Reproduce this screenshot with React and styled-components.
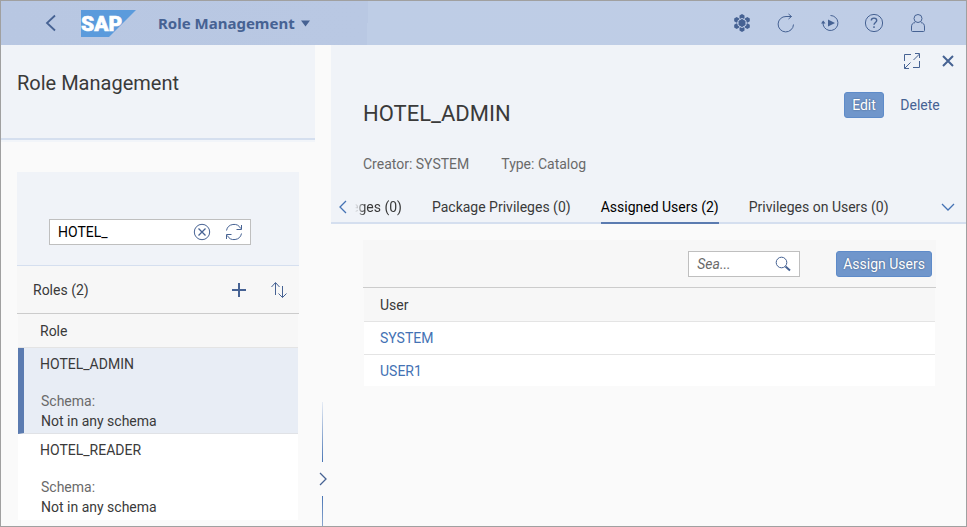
import React from "react";
import styled, { createGlobalStyle } from "styled-components";

const GlobalStyle = createGlobalStyle`
  *, *::before, *::after { box-sizing: border-box; }
  body {
    margin: 0;
    background: #fafafa;
    color: #3a3a3a;
    font: 14px/20px Roboto, "Liberation Sans", sans-serif;
  }
  h1, h2, p { margin: 0; font-weight: 400; }
`;

const Page = styled.div`
  display: flex;
  flex-direction: column;
  min-height: 100vh;
  border: 1px solid #a0a0a0;
  background: #fafafa;
`;

const ShellBar = styled.header`
  display: flex;
  align-items: center;
  justify-content: space-between;
  height: 44px;
  padding: 0 26px 0 34px;
  background: linear-gradient(92deg, #b8c7e2 0, #b9c8e3 38%, #becde6 38%, #bfcde6 100%);
`;

const ShellGroup = styled.div`
  display: flex;
  align-items: center;
`;

const IconButton = styled.button`
  display: inline-flex;
  align-items: center;
  justify-content: center;
  flex: none;
  width: ${(p) => p.$width || 32}px;
  height: ${(p) => p.$height || 24}px;
  padding: 0;
  border: 0;
  background: transparent;
  color: ${(p) => p.$color || "#466293"};
  cursor: pointer;
`;

const LogoLink = styled.a`
  display: flex;
  margin-left: 14px;
`;

const AppTitle = styled.button`
  display: flex;
  align-items: center;
  gap: 6px;
  margin-left: 22px;
  padding: 0;
  border: 0;
  background: transparent;
  color: #466293;
  font: 700 15px/24px "Noto Sans", sans-serif;
  cursor: pointer;
`;

const Columns = styled.main`
  flex: 1;
  display: grid;
  grid-template-columns: 314px 16px minmax(0, 1fr);
`;

const MasterHeader = styled.div`
  height: 95px;
  padding: 25px 16px 0;
  background: #f0f3f8;
  border-bottom: 2px solid #d5dfef;
  box-shadow: 0 2px 0 #f2f5f9;
`;

const PageTitle = styled.h1`
  font-size: 20px;
  line-height: 26px;
`;

const ListCard = styled.div`
  margin: 32px 16px 6px;
`;

const FilterArea = styled.div`
  padding: 47px 48px 20px 32px;
  background: #f0f3f8;
  border-bottom: 1px solid #d5dfef;
`;

const Field = styled.form`
  display: flex;
  align-items: center;
  width: ${(p) => p.$width || "100%"};
  height: 26px;
  padding-left: 8px;
  background: #fff;
  border: 1px solid #bfbfbf;
`;

const FieldInput = styled.input`
  flex: 1;
  min-width: 0;
  height: 24px;
  padding: 0;
  border: 0;
  outline: 0;
  background: transparent;
  color: #000;
  font: inherit;
  &::placeholder {
    color: #6a6a6a;
    font-style: italic;
    opacity: 1;
  }
`;

const Toolbar = styled.div`
  display: flex;
  align-items: center;
  justify-content: ${(p) => (p.$end ? "flex-end" : "space-between")};
  gap: ${(p) => (p.$end ? 36 : 8)}px;
  height: 48px;
  padding: ${(p) => (p.$end ? "0 4px" : "0 4px 0 16px")};
  background: #f7f7f7;
  border-bottom: 1px solid #ccc;
`;

const ToolbarActions = styled.div`
  display: flex;
  gap: 8px;
`;

const TableWrap = styled.div`
  padding: 0 1px;
`;

const Table = styled.table`
  width: 100%;
  border-collapse: separate;
  border-spacing: 0;
`;

const HeadCell = styled.th`
  height: 34px;
  padding: 0 ${(p) => p.$pad}px;
  background: #f7f7f7;
  border-bottom: 1px solid #e4e4e4;
  font-weight: 400;
  text-align: left;
`;

const RoleCell = styled.td`
  height: 86px;
  padding: 6px 16px 2px;
  vertical-align: top;
  border-left: 6px solid ${(p) => (p.$selected ? "#5b7bb0" : "#fff")};
  border-bottom: ${(p) => (p.$selected ? "1px solid #e0e2e6" : "0")};
  background: ${(p) => (p.$selected ? "#e8edf5" : "#fff")};
`;

const RoleDetail = styled.dl`
  margin: 17px 0 0 1px;
`;

const DetailLabel = styled.dt`
  color: #6a6a6a;
`;

const DetailValue = styled.dd`
  margin: 0;
`;

const Splitter = styled.div`
  display: flex;
  flex-direction: column;
  align-items: center;
  justify-content: flex-end;
  gap: 4px;
  padding-right: 1px;
`;

const SplitLine = styled.div`
  width: 1px;
  height: ${(p) => (p.$fade ? 60 : 30)}px;
  background: ${(p) => (p.$fade ? "linear-gradient(#e6ecf5, #4a76b5)" : "linear-gradient(#4a76b5, #8aa6cf)")};
`;

const ObjectHeader = styled.div`
  background: #f0f3f8;
`;

const WindowActions = styled.div`
  display: flex;
  justify-content: flex-end;
  padding-top: 4px;
`;

const TitleRow = styled.div`
  display: flex;
  justify-content: space-between;
  align-items: flex-start;
  padding: 19px 26px 0 32px;
`;

const ObjectTitle = styled.h2`
  margin-top: 9px;
  font-size: 22px;
  line-height: 26px;
`;

const Actions = styled.div`
  display: flex;
  gap: 16px;
`;

const Button = styled.button`
  min-width: 40px;
  height: 26px;
  padding: 0 ${(p) => (p.$primary ? 6 : 0)}px;
  border: ${(p) => (p.$primary ? "1px solid #5e8bc9" : "0")};
  border-radius: 3px;
  background: ${(p) => (p.$primary ? "#7096cb" : "transparent")};
  color: ${(p) => (p.$primary ? "#fff" : "#466293")};
  font: inherit;
  text-shadow: ${(p) => (p.$primary ? "0 0 2px rgba(0, 0, 0, 0.4)" : "none")};
  cursor: pointer;
`;

const Meta = styled.div`
  display: flex;
  gap: 32px;
  padding: 27px 32px 23px;
  color: #6a6a6a;
`;

const TabBar = styled.div`
  display: flex;
  align-items: flex-start;
  height: 27px;
  border-bottom: 2px solid #d5dfef;
`;

const TabList = styled.nav`
  flex: 1;
  min-width: 0;
  display: flex;
  gap: 30px;
  height: 27px;
  margin-left: -4px;
`;

const Tab = styled.button`
  flex: none;
  padding: 0 0 5px;
  border: 0;
  border-bottom: 2px solid ${(p) => (p.$active ? "#5b7bb0" : "transparent")};
  background: transparent;
  color: ${(p) => (p.$active ? "#000" : "#3a3a3a")};
  font: inherit;
  white-space: nowrap;
  cursor: pointer;
  ${(p) => p.$faded && "mask-image: linear-gradient(90deg, transparent 4px, #000 14px);"}
`;

const Content = styled.div`
  padding: 16px 30px 16px 32px;
`;

const UserCell = styled.td`
  height: ${(p) => (p.$last ? 31 : 33)}px;
  padding: 0 16px;
  background: #fff;
  border-bottom: ${(p) => (p.$last ? "0" : "1px solid #e4e4e4")};
`;

const UserLink = styled.a`
  color: #4472b4;
  text-decoration: none;
`;

const Svg = ({ w, h, sw = 1, children }) => (
  <svg width={w} height={h} viewBox={`0 0 ${w} ${h}`} fill="none" stroke="currentColor" strokeWidth={sw} aria-hidden="true">
    {children}
  </svg>
);

const hex = (cx, cy, r) =>
  [0, 1, 2, 3, 4, 5]
    .map((i) => {
      const a = (Math.PI / 3) * i + Math.PI / 6;
      return `${(cx + r * Math.cos(a)).toFixed(2)},${(cy + r * Math.sin(a)).toFixed(2)}`;
    })
    .join(" ");

const HexIcon = () => (
  <Svg w={18} h={18}>
    <g fill="currentColor" stroke="none">
      {[[9, 2.9], [14.3, 5.9], [14.3, 12.1], [9, 15.1], [3.7, 12.1], [3.7, 5.9]].map(([x, y]) => (
        <polygon key={`${x}-${y}`} points={hex(x, y, 2.9)} />
      ))}
    </g>
    <polygon points={hex(9, 9, 4.6)} fill="currentColor" stroke="#bfcde6" strokeWidth="1" />
  </Svg>
);

const RefreshIcon = () => (
  <Svg w={18} h={20}>
    <path d="M16.5 11.5A7.7 7.7 0 1 1 9 3.5h5.5M11.5 1l3 2.5-3 2.5" />
  </Svg>
);

const ReplayIcon = () => (
  <Svg w={18} h={18}>
    <path d="M9.5 1.5A7.5 7.5 0 1 1 2.200 11V7.500" />
    <path d="M0 9.500l2.200-3 2.300 3zM7 5.500v7l7-3.500z" fill="currentColor" stroke="none" />
  </Svg>
);

const HelpIcon = () => (
  <Svg w={20} h={20}>
    <circle cx="10" cy="10" r="8.6" />
    <path d="M7.3 7.6c0-1.6 1.1-2.5 2.7-2.5s2.7.9 2.7 2.3c0 2-2.7 2.1-2.7 4.4M10 13.3v1.6" strokeWidth="1.4" />
  </Svg>
);

const PersonIcon = () => (
  <Svg w={16} h={20}>
    <circle cx="8" cy="5.5" r="4" />
    <path d="M5 9.7c-2.500 0-3.500 1.800-3.500 4.300v3.500q0 1 1 1h11q1 0 1-1V14c0-2.500-1-4.300-3.500-4.300" />
  </Svg>
);

const ExpandIcon = () => (
  <Svg w={18} h={18}>
    <path d="M1.500 9V2.500H8M16.500 9v6.500H10M10.500 8l6-6M12 1.500h4.500V6M7.500 10.500l-6 6M1.500 12v4.500H6" />
  </Svg>
);

const Logo = () => (
  <svg width="55" height="27" viewBox="0 0 55 27" role="img" aria-label="SAP">
    <polygon points="0,0 55,0 28,27 0,27" fill="#5b9bdc" />
    <text x="0" y="21" fill="#fff" stroke="#fff" strokeWidth="0.6" fontFamily="Roboto, sans-serif" fontWeight="900" fontSize="21">SAP</text>
  </svg>
);

const roles = [
  { name: "HOTEL_ADMIN", schema: "Not in any schema", selected: true },
  { name: "HOTEL_READER", schema: "Not in any schema", selected: false },
];

const users = ["SYSTEM", "USER1"];

const tabs = [
  { label: "eges (0)", faded: true },
  { label: "Package Privileges (0)" },
  { label: "Assigned Users (2)", active: true },
  { label: "Privileges on Users (0)" },
];

const stop = (e) => e.preventDefault();

export default function App() {
  return (
    <Page>
      <GlobalStyle />
      <ShellBar>
        <ShellGroup>
          <IconButton aria-label="Back">
            <Svg w={12} h={18} sw={1.8}><path d="M10 1.500L2 9l8 7.500" /></Svg>
          </IconButton>
          <LogoLink href="#home"><Logo /></LogoLink>
          <AppTitle>
            Role Management
            <Svg w={9} h={7}><path d="M0 .5h9l-4.500 6z" fill="currentColor" stroke="none" /></Svg>
          </AppTitle>
        </ShellGroup>
        <ShellGroup>
          <IconButton $width={44} aria-label="Modules"><HexIcon /></IconButton>
          <IconButton $width={44} aria-label="Refresh"><RefreshIcon /></IconButton>
          <IconButton $width={44} aria-label="Auto refresh"><ReplayIcon /></IconButton>
          <IconButton $width={44} aria-label="Help"><HelpIcon /></IconButton>
          <IconButton $width={44} aria-label="User"><PersonIcon /></IconButton>
        </ShellGroup>
      </ShellBar>
      <Columns>
        <section>
          <MasterHeader><PageTitle>Role Management</PageTitle></MasterHeader>
          <ListCard>
            <FilterArea>
              <Field onSubmit={stop} role="search">
                <FieldInput aria-label="Filter roles" defaultValue="HOTEL_" />
                <IconButton type="reset" aria-label="Clear">
                  <Svg w={18} h={18}><circle cx="9" cy="9" r="7.700" /><path d="M5.500 5.500l7 7M12.500 5.500l-7 7" strokeWidth="1.3" /></Svg>
                </IconButton>
                <IconButton aria-label="Reload">
                  <Svg w={18} h={18}>
                    <path d="M1.500 7.500A7.600 7.600 0 0 1 15.700 5.500M16.500 2v4.500h-5M16.500 10.500A7.600 7.600 0 0 1 2.300 12.500M1.500 16v-4.500h5" />
                  </Svg>
                </IconButton>
              </Field>
            </FilterArea>
            <Toolbar>
              <span>Roles (2)</span>
              <ToolbarActions>
                <IconButton aria-label="Create role"><Svg w={16} h={16} sw={2}><path d="M8 1v14M1 8h14" /></Svg></IconButton>
                <IconButton aria-label="Sort">
                  <Svg w={18} h={18}><path d="M5.500 14V2M1.500 6l4-4.500 4 4.500M12.500 5v11.500M8.500 12.500l4 4 4-4" /></Svg>
                </IconButton>
              </ToolbarActions>
            </Toolbar>
            <TableWrap>
              <Table>
                <thead><tr><HeadCell $pad={22} scope="col">Role</HeadCell></tr></thead>
                <tbody>
                  {roles.map((r) => (
                    <tr key={r.name}>
                      <RoleCell $selected={r.selected}>
                        {r.name}
                        <RoleDetail>
                          <DetailLabel>Schema:</DetailLabel>
                          <DetailValue>{r.schema}</DetailValue>
                        </RoleDetail>
                      </RoleCell>
                    </tr>
                  ))}
                </tbody>
              </Table>
            </TableWrap>
          </ListCard>
        </section>
        <Splitter>
          <SplitLine $fade />
          <IconButton $width={15} $height={26} aria-label="Expand list"><Svg w={8} h={14} sw={1.3}><path d="M1 1l6 6-6 6" /></Svg></IconButton>
          <SplitLine />
        </Splitter>
        <section>
          <ObjectHeader>
            <WindowActions>
              <IconButton $width={36} aria-label="Full screen"><ExpandIcon /></IconButton>
              <IconButton $width={36} aria-label="Close"><Svg w={12} h={12} sw={2}><path d="M1 1l10 10M11 1L1 11" /></Svg></IconButton>
            </WindowActions>
            <TitleRow>
              <ObjectTitle>HOTEL_ADMIN</ObjectTitle>
              <Actions>
                <Button $primary>Edit</Button>
                <Button>Delete</Button>
              </Actions>
            </TitleRow>
            <Meta><span>Creator: SYSTEM</span><span>Type: Catalog</span></Meta>
            <TabBar>
              <IconButton $width={24} $height={20} $color="#4472b4" aria-label="Previous tabs"><Svg w={8} h={14} sw={1.3}><path d="M7 1L1 7l6 6" /></Svg></IconButton>
              <TabList>
                {tabs.map((t) => (
                  <Tab key={t.label} $active={t.active} $faded={t.faded}>{t.label}</Tab>
                ))}
              </TabList>
              <IconButton $width={36} $height={20} $color="#4472b4" aria-label="More tabs"><Svg w={14} h={8} sw={1.3}><path d="M1 1l6 6 6-6" /></Svg></IconButton>
            </TabBar>
          </ObjectHeader>
          <Content>
            <Toolbar $end>
              <Field $width="112px" onSubmit={stop} role="search">
                <FieldInput aria-label="Search users" placeholder="Sea..." />
                <IconButton aria-label="Search">
                  <Svg w={16} h={16}><circle cx="6.500" cy="6.500" r="5.300" /><path d="M10.500 10.500l4.500 4" strokeWidth="2" /></Svg>
                </IconButton>
              </Field>
              <Button $primary>Assign Users</Button>
            </Toolbar>
            <TableWrap>
              <Table>
                <thead><tr><HeadCell $pad={16} scope="col">User</HeadCell></tr></thead>
                <tbody>
                  {users.map((u, i) => (
                    <tr key={u}>
                      <UserCell $last={i === users.length - 1}><UserLink href={`#${u}`}>{u}</UserLink></UserCell>
                    </tr>
                  ))}
                </tbody>
              </Table>
            </TableWrap>
          </Content>
        </section>
      </Columns>
    </Page>
  );
}
